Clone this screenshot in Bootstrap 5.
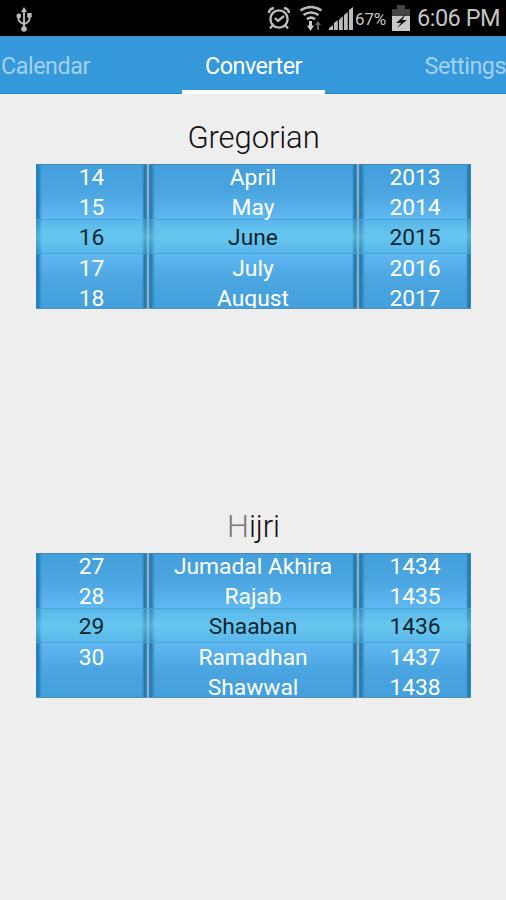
<!DOCTYPE html>
<html lang="en">
<head>
<meta charset="utf-8">
<meta name="viewport" content="width=device-width, initial-scale=1">
<title>Converter</title>
<link rel="stylesheet" href="https://cdn.jsdelivr.net/npm/bootstrap@5.3.0/dist/css/bootstrap.min.css">
<style>
body{font-family:Roboto,"Liberation Sans",sans-serif;background:#eee;height:900px}
.status{height:36px;background:#000;color:#c4c4c4;padding:0 6px 0 16px}
.status svg{display:block;flex:none}
.pct{font-size:17px;line-height:36px;letter-spacing:-.2px;margin:2px 6px 0 2px}
.clock{font-size:23.5px;line-height:36px;letter-spacing:-.5px;margin-left:7px}
.tabs{height:58px;background:#3498db;border-top:1px solid #4b90bd;border-bottom:1px solid #1787cf;font-size:23.3px;line-height:58px;letter-spacing:-.45px}
.tabs a{color:#a3d1f3;text-decoration:none}
.tabs .current{color:#fff;width:143px;border-bottom:4px solid #fff;height:57px}
.side{flex:1 1 0}
.side:first-child{padding-left:1px}
.heading{font-size:31px;font-weight:300;line-height:42px;height:47px;margin:0;color:#111;letter-spacing:-.1px}
.heading span{color:#777}
.converter{padding:23px 35px 0 36px}
.converter + .converter{padding-top:197px}
.wheels{height:145px;background:#9caab8;gap:2px;position:relative}
.wheel{height:145px;overflow:hidden;font-size:22.8px;line-height:30.4px;color:#fff;
 background:linear-gradient(90deg,#2f88bc 0,#2079b0 2px,#2a86c0 3px,#3b96d300 6px,#3b96d300 calc(100% - 5px),#2680b8 calc(100% - 3px),#1d74aa calc(100% - 2px),#3f91bd 100%),linear-gradient(#44a0dc 0,#49a4e0 18%,#60b8f2 38%,#60b8f2 62%,#49a4e0 82%,#44a0dc 100%);
 border-top:1px solid #4686b1;border-bottom:1px solid #5690b5}
.wheel ul{margin-top:-2.4px}
.wheel li{height:30.4px;position:relative;z-index:1}
.wheel .chosen{color:#10262e}
.day{width:111px}.month{width:208px}.year{flex:1}
.lens{position:absolute;left:0;right:0;top:55px;height:35px;border:1px solid #46a6cf;border-width:1px 0;background:linear-gradient(rgba(80,180,225,.36),rgba(108,208,236,.62) 50%,rgba(80,180,225,.36))}
</style>
<script src="https://cdn.jsdelivr.net/npm/bootstrap@5.3.0/dist/js/bootstrap.bundle.min.js"></script>
</head>
<body class="overflow-hidden">
<header class="status d-flex align-items-center">
 <svg class="me-auto" width="17" height="28" viewBox="0 0 17 28" fill="none" stroke="#bbb" stroke-width="1.9"><path d="M8 25V5M2.500 12v3q0 3 5.500 5M13.500 10v5q0 3-5.500 5"/><path d="M8 3l3 5H5z" fill="#bbb" stroke="none"/><circle cx="8" cy="25" r="2.800" fill="#bbb" stroke="none"/><circle cx="2.800" cy="12" r="2.400" fill="#bbb" stroke="none"/><path d="M11.200 9h4.500v4.500h-4.500z" fill="#bbb" stroke="none"/></svg>
 <svg width="24" height="24" viewBox="0 0 24 24" fill="none" stroke="#bbb" stroke-width="2.400"><circle cx="12" cy="13" r="8.600"/><path d="M8 12l3 3 6-5M2 7q0-4 5-5M22 7q0-4-5-5M6 19l-3 3.500M18 19l3 3.500"/></svg>
 <svg class="ms-2" width="26" height="27" viewBox="0 0 26 27" fill="none" stroke="#bbb" stroke-width="2.600"><path d="M1.500 5.500q10.500-7 21 0M4.500 10q7.500-5 15 0M8 14.200q4-3 8 0"/><path d="M8 20.500l3.500 5.500 3.500-5.500h-2V16h-3v4.500z" fill="#ccc" stroke="none"/><path d="M19 16l-3 4h2v5h2v-5h2z" fill="#666" stroke="none"/></svg>
 <svg class="ms-1" width="24" height="24" viewBox="0 0 24 24" fill="#bbb"><path d="M0 24v-2l4-3v5zM5 24v-7l3.800-3v10zM10 24v-10l3.800-4v14zM15 24V9l3.800-3v18zM20 24V4l4-3v23z"/></svg>
 <span class="pct">67%</span>
 <svg width="18" height="26" viewBox="0 0 18 26"><path d="M0 4h5V0h8v4h5v8H0z" fill="#444"/><path d="M0 11h18v15H0z" fill="#c8c8c8"/><path d="M14 9L4 18h5l-4 5 10-8h-5z" fill="#111"/></svg>
 <span class="clock">6:06 PM</span>
</header>
<nav class="tabs d-flex">
 <a class="side" href="#">Calendar</a>
 <a class="current text-center" href="#">Converter</a>
 <a class="side text-end" href="#">Settings</a>
</nav>
<main>
 <section class="converter">
  <h2 class="heading text-center">Gregorian</h2>
  <div class="wheels d-flex text-center">
   <div class="wheel day"><ul class="list-unstyled"><li>14</li><li>15</li><li class="chosen">16</li><li>17</li><li>18</li></ul></div>
   <div class="wheel month"><ul class="list-unstyled"><li>April</li><li>May</li><li class="chosen">June</li><li>July</li><li>August</li></ul></div>
   <div class="wheel year"><ul class="list-unstyled"><li>2013</li><li>2014</li><li class="chosen">2015</li><li>2016</li><li>2017</li></ul></div>
   <div class="lens"></div>
  </div>
 </section>
 <section class="converter">
  <h2 class="heading text-center"><span>H</span>ijri</h2>
  <div class="wheels d-flex text-center">
   <div class="wheel day"><ul class="list-unstyled"><li>27</li><li>28</li><li class="chosen">29</li><li>30</li></ul></div>
   <div class="wheel month"><ul class="list-unstyled"><li>Jumadal Akhira</li><li>Rajab</li><li class="chosen">Shaaban</li><li>Ramadhan</li><li>Shawwal</li></ul></div>
   <div class="wheel year"><ul class="list-unstyled"><li>1434</li><li>1435</li><li class="chosen">1436</li><li>1437</li><li>1438</li></ul></div>
   <div class="lens"></div>
  </div>
 </section>
</main>
</body>
</html>
